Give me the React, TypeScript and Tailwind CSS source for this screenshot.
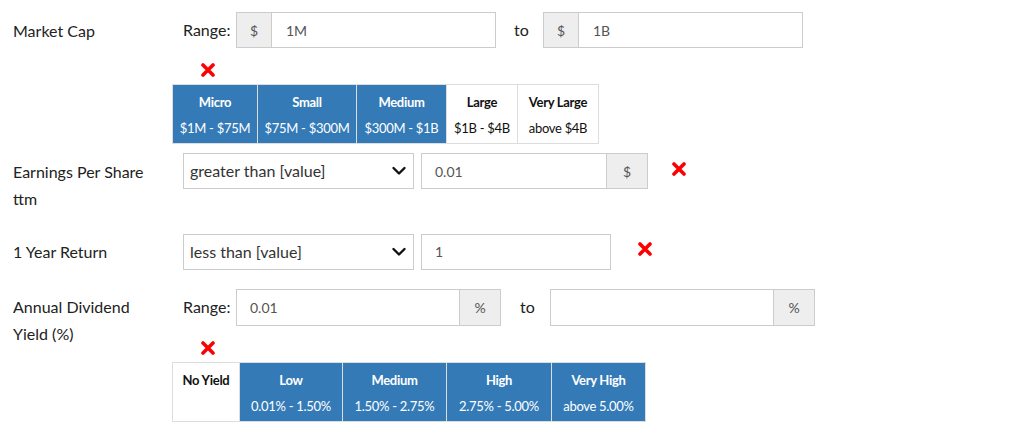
import React from 'react'

const font = { fontFamily: 'Lato, "Noto Sans", sans-serif' }

function RedX({ className = '' }: { className?: string }) {
  return (
    <svg width="14" height="14" viewBox="0 0 14 14" className={className} aria-hidden="true">
      <path d="M2 2L12 12M12 2L2 12" stroke="#ff0000" strokeWidth="3.6" strokeLinecap="round" />
    </svg>
  )
}

function Chevron() {
  return (
    <svg width="16" height="16" viewBox="0 0 16 16" fill="none" aria-hidden="true">
      <path d="M2.5 5L8 10.5L13.5 5" stroke="#111" strokeWidth="2.4" strokeLinecap="round" strokeLinejoin="round" />
    </svg>
  )
}

function Addon({ children, side }: { children: React.ReactNode; side: 'left' | 'right' }) {
  return (
    <span
      className={`flex h-full shrink-0 items-center justify-center bg-[#eeeeee] text-[14px] text-[#555] ${
        side === 'left' ? 'w-[35px] border-r border-[#ccc]' : 'w-[41px] border-l border-[#ccc]'
      }`}
    >
      {children}
    </span>
  )
}

function InputGroup({
  width,
  value,
  left,
  right,
}: {
  width: string
  value: string
  left?: string
  right?: string
}) {
  return (
    <div className={`flex items-center border border-[#ccc] bg-white ${width}`}>
      {left && <Addon side="left">{left}</Addon>}
      <span className={`flex-1 text-[14px] text-[#555] ${left ? 'pl-[14px]' : 'pl-[13px]'}`}>{value}</span>
      {right && <Addon side="right">{right}</Addon>}
    </div>
  )
}

function Select({ value }: { value: string }) {
  return (
    <div className="flex h-[36px] w-[231px] items-center justify-between border border-[#ccc] bg-white pl-[6px] pr-[6px] text-[16px] text-[#333]">
      <span>{value}</span>
      <Chevron />
    </div>
  )
}

type Cell = { title: string; sub: string; on: boolean; w: string }

function ButtonGroup({ cells }: { cells: Cell[] }) {
  return (
    <div className="-ml-[11px] flex h-[60px] self-start border border-[#ddd]">
      {cells.map((c, i) => (
        <div
          key={c.title}
          className={`flex flex-col items-center pt-[4px] ${c.w} ${i > 0 ? 'border-l border-[#ddd]' : ''} ${
            c.on ? 'bg-[#337ab7] text-white' : 'bg-white text-[#111]'
          }`}
        >
          <span className="text-[13px] leading-[26px] font-bold tracking-[-0.3px]">{c.title}</span>
          <span className="whitespace-nowrap text-[13px] leading-[26px] tracking-[-0.3px]">{c.sub}</span>
        </div>
      ))}
    </div>
  )
}

const capCells: Cell[] = [
  { title: 'Micro', sub: '$1M - $75M', on: true, w: 'w-[84px]' },
  { title: 'Small', sub: '$75M - $300M', on: true, w: 'w-[99px]' },
  { title: 'Medium', sub: '$300M - $1B', on: true, w: 'w-[90px]' },
  { title: 'Large', sub: '$1B - $4B', on: false, w: 'w-[71px]' },
  { title: 'Very Large', sub: 'above $4B', on: false, w: 'w-[81px]' },
]

const yieldCells: Cell[] = [
  { title: 'No Yield', sub: '', on: false, w: 'w-[66px]' },
  { title: 'Low', sub: '0.01% - 1.50%', on: true, w: 'w-[103px]' },
  { title: 'Medium', sub: '1.50% - 2.75%', on: true, w: 'w-[104px]' },
  { title: 'High', sub: '2.75% - 5.00%', on: true, w: 'w-[105px]' },
  { title: 'Very High', sub: 'above 5.00%', on: true, w: 'w-[94px]' },
]

export default function App() {
  return (
    <div className="min-h-[424px] w-[1017px] bg-white pl-[13px] pt-[12px] text-[16px] text-[#222]" style={font}>
      {/* Market Cap */}
      <div className="flex">
        <div className="w-[170px] shrink-0 pt-[4.5px] leading-[27px]">Market Cap</div>
        <div className="flex flex-col">
          <div className="flex h-[36px] items-center">
            <span className="w-[53px]">Range:</span>
            <InputGroup width="w-[260px] h-[36px]" left="$" value="1M" />
            <span className="w-[47px] pl-[18px]">to</span>
            <InputGroup width="w-[260px] h-[36px]" left="$" value="1B" />
          </div>
          <RedX className="ml-[18px] mt-[15px]" />
          <div className="mt-[7px] flex">
            <ButtonGroup cells={capCells} />
          </div>
        </div>
      </div>

      {/* EPS */}
      <div className="mt-[9px] flex">
        <div className="w-[170px] shrink-0 pt-[4.5px] leading-[27px]">
          Earnings Per Share
          <br />
          ttm
        </div>
        <div className="flex h-[36px] items-center">
          <Select value="greater than [value]" />
          <div className="ml-[7px]">
            <InputGroup width="w-[227px] h-[36px]" right="$" value="0.01" />
          </div>
          <RedX className="ml-[24px] -mt-[4px]" />
        </div>
      </div>

      {/* 1 Year Return */}
      <div className="mt-[22px] flex">
        <div className="w-[170px] shrink-0 pt-[4.5px] leading-[27px]">1 Year Return</div>
        <div className="flex h-[36px] items-center">
          <Select value="less than [value]" />
          <div className="ml-[7px]">
            <InputGroup width="w-[190px] h-[36px]" value="1" />
          </div>
          <RedX className="ml-[27px] -mt-[6px]" />
        </div>
      </div>

      {/* Annual Dividend Yield */}
      <div className="mt-[19px] flex">
        <div className="w-[170px] shrink-0 pt-[4.5px] leading-[27px]">
          Annual Dividend
          <br />
          Yield (%)
        </div>
        <div className="flex flex-col">
          <div className="flex h-[37px] items-center">
            <span className="w-[53px]">Range:</span>
            <InputGroup width="w-[265px] h-[37px]" right="%" value="0.01" />
            <span className="w-[49px] pl-[19px]">to</span>
            <InputGroup width="w-[265px] h-[37px]" right="%" value="" />
          </div>
          <RedX className="ml-[18px] mt-[15px]" />
          <div className="mt-[7px] flex">
            <ButtonGroup cells={yieldCells} />
          </div>
        </div>
      </div>
    </div>
  )
}
